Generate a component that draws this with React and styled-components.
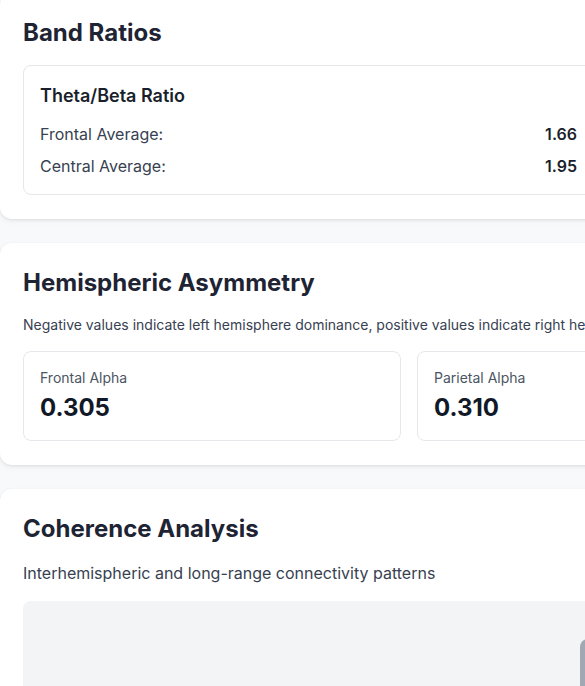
import React from "react";
import styled, { createGlobalStyle } from "styled-components";

const Global = createGlobalStyle`
  html, body { margin: 0; padding: 0; background: #f8f9fb; overflow: hidden; }
  body { font-family: Inter, "Noto Sans", sans-serif; color: #1f2937; }
`;

const Page = styled.div`
  width: 1212px;
  display: flex;
  flex-direction: column;
  gap: 24px;
  margin-top: -7px;
`;

const Card = styled.section`
  background: #ffffff;
  border-radius: 12px;
  box-shadow: 0 1px 3px rgba(0, 0, 0, 0.08), 0 2px 6px rgba(0, 0, 0, 0.05);
  padding: 24px 23px;
  display: flex;
  flex-direction: column;
  gap: 16px;
`;

const Title = styled.h2`
  margin: 0;
  font-size: 24px;
  line-height: 32px;
  font-weight: 700;
  color: #1e2433;
`;

const Desc = styled.p`
  margin: 0;
  font-size: ${(p) => (p.$small ? "14px" : "16px")};
  line-height: ${(p) => (p.$small ? "20px" : "24px")};
  color: #374151;
`;

const Grid = styled.div`
  display: grid;
  grid-template-columns: repeat(${(p) => p.$cols}, 1fr);
  gap: ${(p) => p.$gap || 16}px;
`;

const Box = styled.div`
  border: 1px solid #e5e7eb;
  border-radius: 8px;
  padding: 16px;
  display: flex;
  flex-direction: column;
`;

const BoxTitle = styled.h3`
  margin: 0 0 12px;
  font-size: 18px;
  line-height: 28px;
  font-weight: 600;
  color: #1a1f2c;
`;

const Rows = styled.div`
  display: flex;
  flex-direction: column;
  gap: 8px;
`;

const Row = styled.div`
  display: flex;
  justify-content: space-between;
  font-size: 16px;
  line-height: 24px;
  color: #374151;
`;

const RowValue = styled.span`
  font-weight: 600;
  color: #1a1f2c;
`;

const Label = styled.div`
  font-size: 14px;
  line-height: 20px;
  color: #4b5563;
`;

const Value = styled.div`
  margin-top: 4px;
  font-size: 24px;
  line-height: 32px;
  font-weight: 700;
  color: #111827;
`;

const ChartArea = styled.div`
  background: #f3f4f6;
  border-radius: 8px;
  height: 400px;
  display: flex;
  justify-content: center;
  padding-top: 38px;
`;

const Handle = styled.div`
  width: 52px;
  height: 60px;
  background: #a0a8b3;
  border-radius: 8px;
`;

export default function App() {
  return (
    <>
      <Global />
      <Page>
        <Card>
          <Title>Band Ratios</Title>
          <Grid $cols={2} $gap={24}>
            <Box>
              <BoxTitle>Theta/Beta Ratio</BoxTitle>
              <Rows>
                <Row>
                  <span>Frontal Average:</span>
                  <RowValue>1.66</RowValue>
                </Row>
                <Row>
                  <span>Central Average:</span>
                  <RowValue>1.95</RowValue>
                </Row>
              </Rows>
            </Box>
            <Box>
              <BoxTitle>Alpha/Theta Ratio</BoxTitle>
              <Rows>
                <Row>
                  <span>Posterior Average:</span>
                  <RowValue>1.42</RowValue>
                </Row>
                <Row>
                  <span>Central Average:</span>
                  <RowValue>1.18</RowValue>
                </Row>
              </Rows>
            </Box>
          </Grid>
        </Card>
        <Card>
          <Title>Hemispheric Asymmetry</Title>
          <Desc $small>
            Negative values indicate left hemisphere dominance, positive values indicate right hemisphere dominance
          </Desc>
          <Grid $cols={3}>
            <Box>
              <Label>Frontal Alpha</Label>
              <Value>0.305</Value>
            </Box>
            <Box>
              <Label>Parietal Alpha</Label>
              <Value>0.310</Value>
            </Box>
            <Box>
              <Label>Temporal Alpha</Label>
              <Value>0.112</Value>
            </Box>
          </Grid>
        </Card>
        <Card>
          <Title>Coherence Analysis</Title>
          <Desc>Interhemispheric and long-range connectivity patterns</Desc>
          <ChartArea>
            <Handle />
          </ChartArea>
        </Card>
      </Page>
    </>
  );
}
